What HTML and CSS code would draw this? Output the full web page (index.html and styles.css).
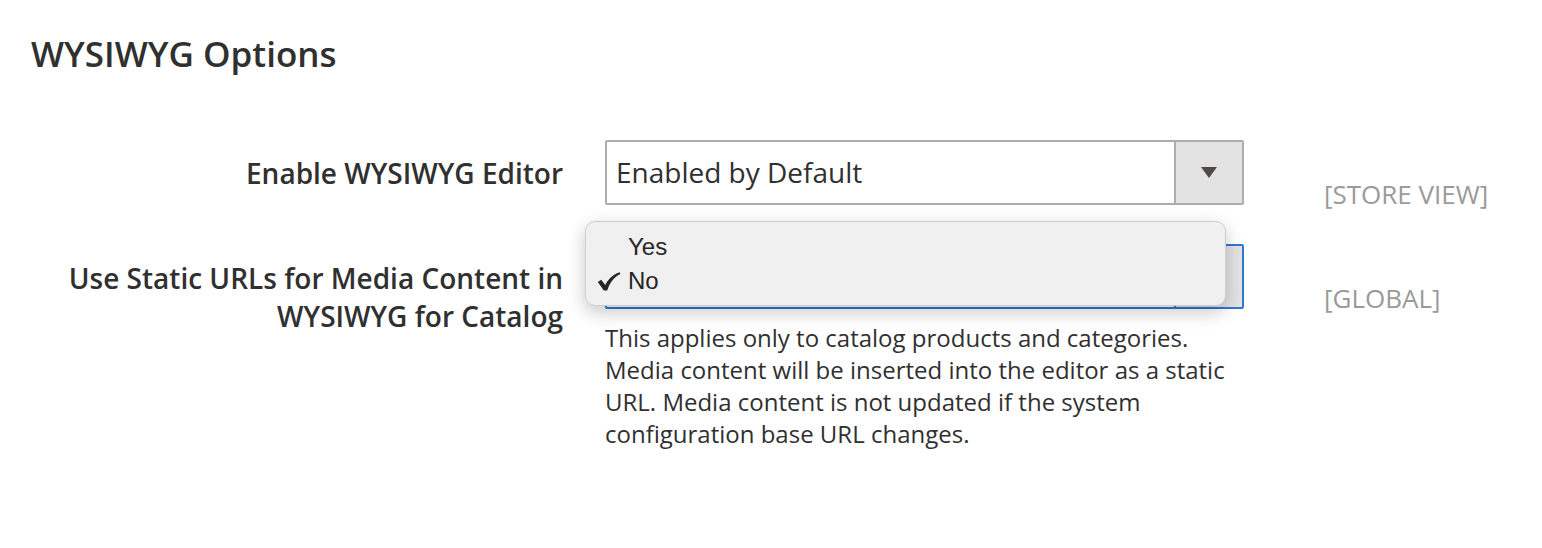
FILE: index.html
```html
<!DOCTYPE html>
<html lang="en">
<head>
<meta charset="utf-8">
<title>WYSIWYG Options</title>
<link rel="stylesheet" href="styles.css">
</head>
<body>
<div class="page">
  <h2 class="title">WYSIWYG Options</h2>
  <div class="form">
    <div class="row">
      <div class="label">Enable WYSIWYG Editor</div>
      <div class="control">
        <div class="select">
          <span class="value">Enabled by Default</span>
          <span class="btn"><span class="arrow"></span></span>
        </div>
      </div>
      <div class="scope scope-1">[STORE VIEW]</div>
    </div>
    <div class="row row-2">
      <div class="label">Use Static URLs for Media Content in WYSIWYG for Catalog</div>
      <div class="control">
        <div class="select focused">
          <span class="value"></span>
          <span class="btn"><span class="arrow"></span></span>
        </div>
        <div class="menu">
          <div class="opt"><span class="check"></span>Yes</div>
          <div class="opt"><span class="check"><svg width="24" height="19" viewBox="0 0 24 19"><path d="M0.8 10 L4.2 7.8 L8.3 13 C11 7.4 15.4 2.6 22.6 0.2 L23.4 2 C17 5.2 12.8 10.6 10.2 18.6 L6.8 18.6 Z" fill="#262626"/></svg></span>No</div>
        </div>
        <p class="note">This applies only to catalog products and categories. Media content will be inserted into the editor as a static URL. Media content is not updated if the system configuration base URL changes.</p>
      </div>
      <div class="scope scope-2">[GLOBAL]</div>
    </div>
  </div>
</div>
</body>
</html>
```

FILE: styles.css
```css
html, body {
  margin: 0;
  padding: 0;
  background: #ffffff;
}
body {
  font-family: "Open Sans", "Liberation Sans", sans-serif;
  color: #303030;
}
.page {
  padding: 30px 0 0 31px;
}
.title {
  margin: 0;
  font-size: 35px;
  font-weight: 600;
  line-height: 48px;
  color: #303030;
}
.form {
  margin-top: 62px;
}
.row {
  display: grid;
  grid-template-columns: 532px 639px 220px;
  column-gap: 42px;
  align-items: start;
}
.row-2 {
  margin-top: 34px;
}
.row .scope {
  margin-left: 38px;
}
.label {
  text-align: right;
  font-size: 28px;
  font-weight: 600;
  line-height: 38px;
  padding-top: 14px;
}
.row-2 .label {
  padding-top: 15px;
}
.control {
  position: relative;
}
.select {
  display: flex;
  height: 65px;
  box-sizing: border-box;
  border: 2px solid #adadad;
  border-radius: 2px;
  background: #ffffff;
}
.select.focused {
  border-color: #2f78d6;
}
.value {
  flex: 1;
  padding-left: 9px;
  font-size: 28px;
  line-height: 61px;
  color: #303030;
}
.btn {
  width: 66px;
  border-left: 2px solid #adadad;
  background: #e3e3e3;
  display: flex;
  align-items: center;
  justify-content: center;
}
.focused .btn {
  border-left-color: #2f78d6;
}
.arrow {
  width: 0;
  height: 0;
  border-left: 8px solid transparent;
  border-right: 8px solid transparent;
  border-top: 11px solid #514943;
}
.note {
  margin: 13px 0 0 0;
  font-size: 24px;
  line-height: 32px;
  color: #303030;
}
.scope {
  font-size: 26px;
  color: #9a9a9a;
  line-height: 32px;
}
.scope-1 {
  padding-top: 38px;
}
.scope-2 {
  padding-top: 38px;
}
.menu {
  position: absolute;
  left: -20px;
  top: -23px;
  width: 641px;
  height: 85px;
  box-sizing: border-box;
  background: #f0f0f0;
  border: 1px solid #cfcfcf;
  border-radius: 10px;
  box-shadow: 0 6px 18px rgba(0, 0, 0, 0.22);
  padding-top: 8px;
  font-family: "Liberation Sans", Arial, sans-serif;
}
.opt {
  display: flex;
  align-items: center;
  height: 34px;
  font-size: 24px;
  color: #262626;
}
.check {
  width: 31px;
  padding-left: 11px;
  display: flex;
  align-items: center;
}
```
